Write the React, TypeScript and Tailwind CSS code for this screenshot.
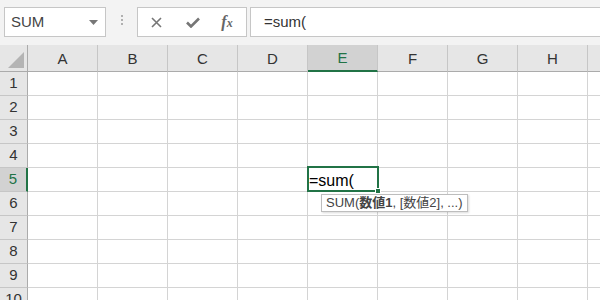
import React from 'react';

const COLS = ['A', 'B', 'C', 'D', 'E', 'F', 'G', 'H', ''];
const ROWS = [1, 2, 3, 4, 5, 6, 7, 8, 9, 10];

const font = { fontFamily: '"Liberation Sans", "Noto Sans CJK JP", sans-serif' };

function Toolbar() {
  return (
    <div className="flex h-[45px] items-start bg-[#f3f3f3] pt-[7px] pl-[4px]">
      <div className="flex h-[30px] w-[102px] items-center justify-between border border-[#c6c6c6] bg-white pl-[6px] pr-[7px]">
        <span className="text-[15px] text-[#444]">SUM</span>
        <svg width="9" height="5" viewBox="0 0 9 5">
          <path d="M0 0h9L4.5 5z" fill="#777" />
        </svg>
      </div>
      <div className="flex w-[31px] flex-col items-center gap-[2px] pt-[8px]">
        <span className="h-[2px] w-[2px] bg-[#b0b0b0]" />
        <span className="h-[2px] w-[2px] bg-[#b0b0b0]" />
        <span className="h-[2px] w-[2px] bg-[#b0b0b0]" />
      </div>
      <div className="flex h-[30px] w-[110px] items-center border border-[#c6c6c6] bg-white">
        <div className="flex w-[38px] justify-center pr-[2px]">
          <svg width="11" height="11" viewBox="0 0 11 11">
            <path d="M1 1l9 9M10 1L1 10" stroke="#767676" strokeWidth="1.6" />
          </svg>
        </div>
        <div className="flex w-[34px] justify-center">
          <svg width="14" height="11" viewBox="0 0 14 11">
            <path d="M1 5.5l4 4L13 1.5" stroke="#767676" strokeWidth="2.6" fill="none" />
          </svg>
        </div>
        <div className="flex w-[34px] justify-center">
          <span
            className="text-[16px] font-bold italic text-[#666]"
            style={{ fontFamily: '"Liberation Serif", serif' }}
          >
            f<span className="text-[12px]">x</span>
          </span>
        </div>
      </div>
      <div className="ml-[3px] flex h-[30px] flex-1 items-center border-y border-l border-[#c6c6c6] bg-white pl-[13px]">
        <span className="text-[15px] text-[#333]">=sum(</span>
      </div>
    </div>
  );
}

export default function App() {
  return (
    <div className="relative h-[300px] w-[600px] overflow-hidden bg-white" style={font}>
      <Toolbar />
      <div className="flex h-[27px] bg-[#e6e6e6]">
        <div className="relative w-[28px] shrink-0 border-r border-b border-[#ababab]">
          <svg className="absolute right-[3px] bottom-[3px]" width="16" height="16" viewBox="0 0 16 16">
            <path d="M16 0V16H0z" fill="#b4b4b4" />
          </svg>
        </div>
        {COLS.map((c, i) => (
          <div
            key={i}
            className={`flex w-[70px] shrink-0 items-center justify-center pt-[2px] text-[15px] ${
              c === 'E'
                ? 'border-b-2 border-b-[#217346] bg-[#d2d2d2] text-[#217346]'
                : 'border-b border-b-[#ababab] text-[#333]'
            } border-r border-r-[#c6c6c6]`}
          >
            {c}
          </div>
        ))}
      </div>
      {ROWS.map((r) => (
        <div key={r} className="flex h-[24px]">
          <div
            className={`flex w-[28px] shrink-0 items-center justify-center border-b border-b-[#c6c6c6] text-[15px] ${
              r === 5
                ? 'border-r-2 border-r-[#217346] bg-[#d2d2d2] text-[#217346]'
                : 'border-r border-r-[#ababab] bg-[#e6e6e6] text-[#333]'
            }`}
          >
            {r}
          </div>
          {COLS.map((c, i) => (
            <div
              key={i}
              className="relative w-[70px] shrink-0 border-r border-b border-[#d4d4d4]"
            >
              {c === 'E' && r === 5 && (
                <span className="absolute left-[1px] top-[1px] text-[16px] text-black">=sum(</span>
              )}
            </div>
          ))}
        </div>
      ))}
      {/* selected cell */}
      <div className="absolute left-[307px] top-[166px] h-[26px] w-[72px] border-2 border-[#217346]" />
      <div className="absolute left-[375px] top-[188px] h-[6px] w-[6px] border border-white bg-[#217346]" />
      {/* function tooltip */}
      <div className="absolute left-[321px] top-[194px] flex h-[18px] items-center border border-[#bdbdbd] bg-white px-[4px] text-[13px] text-[#444] shadow-[1px_1px_2px_rgba(0,0,0,0.15)]">
        SUM(<span className="font-bold">数値1</span>, [数値2], ...)
      </div>
    </div>
  );
}
